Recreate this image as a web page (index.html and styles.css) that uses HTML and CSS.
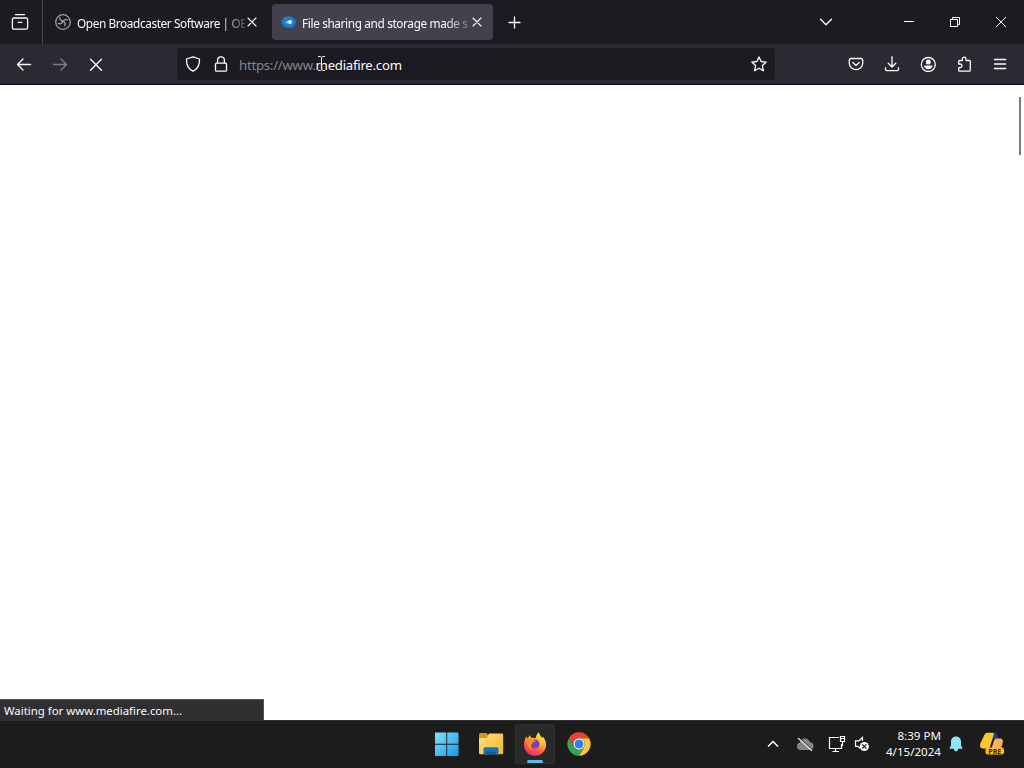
FILE: index.html
```html
<!DOCTYPE html>
<html lang="en">
<head>
<meta charset="utf-8">
<title>File sharing and storage made simple</title>
<link rel="stylesheet" href="styles.css">
</head>
<body>
<div class="screen">
  <header class="tabs">
    <div class="view">
      <svg class="line" width="18" height="18" viewBox="0 0 18 18"><path d="M4.500 1.700h9M3 5h12a1.600 1.600 0 0 1 1.600 1.600v8a1.600 1.600 0 0 1-1.600 1.600H3a1.600 1.600 0 0 1-1.600-1.600v-8A1.600 1.600 0 0 1 3 5zM7.200 9.300h3.600"/></svg>
    </div>
    <div class="tab">
      <svg class="favicon" width="16" height="16" viewBox="0 0 16 16" fill="none" stroke="#a0a0a2"><circle cx="8" cy="8" r="7.300" stroke-width="1.300"/><path stroke-width="1.300" d="M4.800 3.300c-.2 2 .9 3.500 3.200 3.900 1-1.800 3-2.300 5-1M8 7.200c1.800.8 2.600 2.700 1.600 5M8 7.200C7 9.600 5 10.400 2.900 9.200"/></svg>
      <span class="title t1">Open Broadcaster Software | OB</span>
      <svg class="line close" width="16" height="16" viewBox="0 0 16 16"><path d="M4 4l8 8M12 4l-8 8"/></svg>
    </div>
    <div class="tab active">
      <svg class="favicon" width="16" height="16" viewBox="0 0 16 16"><path fill="#1f7acb" d="M3 3.500c2 .1 3.500-1.200 6-1.200A6.700 5.700 0 0 1 15.700 8c0 3.500-2.900 5.800-6.700 5.800-2.500 0-3.800-1.300-6-1.100.8-.6 1-1.200.9-1.800C2.700 10.400 1.500 10 .2 10c1.500-.6 2-1.300 2.300-2.100C1.800 7 1 6.400 0 6.200c1.300-.3 2.300-.4 3.300-.8.1-.7.100-1.200-.3-1.900z"/><path fill="#70c4fa" d="M4 8.800c2 .1 2.700-2.900 6-2.900a2.200 2.200 0 0 1 0 4.400c-2.500 0-3-1.500-6-1.500z"/><circle cx="10" cy="8" r="1.700" fill="#fff"/></svg>
      <span class="title t2">File sharing and storage made s</span>
      <svg class="line close" width="16" height="16" viewBox="0 0 16 16"><path d="M4 4l8 8M12 4l-8 8"/></svg>
    </div>
    <div class="btn plus"><svg class="line" width="16" height="16" viewBox="0 0 16 16"><path d="M7.500 3v11M2 8.500h11"/></svg></div>
    <div class="btn list"><svg class="line" width="16" height="16" viewBox="0 0 16 16"><path d="M2.500 5.300L8 10.700l5.500-5.400"/></svg></div>
    <div class="win"><svg width="12" height="12" viewBox="0 0 12 12" stroke="#fff" fill="none"><path d="M1 5.500h10"/></svg></div>
    <div class="win"><svg width="12" height="12" viewBox="0 0 12 12" stroke="#fff" fill="none"><path d="M1.500 3.500h7v7h-7zM3.500 3.500v-2h7v7h-2"/></svg></div>
    <div class="win"><svg width="12" height="12" viewBox="0 0 12 12" stroke="#fff" fill="none"><path d="M1 1l10 10M11 1L1 11"/></svg></div>
  </header>

  <nav class="toolbar">
    <div class="btn"><svg class="line" width="16" height="16" viewBox="0 0 16 16"><path d="M14.500 8.500h-13M7 3L1.500 8.500 7 14"/></svg></div>
    <div class="btn dim"><svg class="line" width="16" height="16" viewBox="0 0 16 16"><path d="M1.500 8.500h13M9 3l5.500 5.500L9 14"/></svg></div>
    <div class="btn"><svg class="line" width="16" height="16" viewBox="0 0 16 16"><path d="M2.500 3.200l11 11M13.500 3.200l-11 11"/></svg></div>
    <div class="urlbar">
      <svg class="line" width="16" height="16" viewBox="0 0 16 16"><path d="M8 .8L14.500 3c.3 5.600-1.500 9.800-6.500 12.200C3 12.800 1.200 8.600 1.500 3z"/></svg>
      <svg class="line lock" width="16" height="16" viewBox="0 0 16 16"><path d="M3.500 7.200h9a1 1 0 0 1 1 1v6a1 1 0 0 1-1 1h-9a1 1 0 0 1-1-1v-6a1 1 0 0 1 1-1zM4.600 7V4.200a3.400 3.400 0 0 1 6.800 0V7"/></svg>
      <span class="url"><span class="prefix">https://www.</span>mediafire.com</span>
      <svg class="line star" width="16" height="16" viewBox="0 0 16 16"><path d="M8 .9l2.100 4.600 5.100.6-3.800 3.500 1 5.200L8 12.200l-4.400 2.600 1-5.200L.8 6.100l5.100-.6z"/></svg>
    </div>
    <div class="tools">
      <div class="btn"><svg class="line" width="16" height="16" viewBox="0 0 16 16"><path d="M2.800 2.500h10.400a1.500 1.500 0 0 1 1.500 1.500v3.300a6.700 6.300 0 0 1-13.400 0V4a1.500 1.500 0 0 1 1.500-1.500zM4.800 6.500L8 9.500l3.200-3"/></svg></div>
      <div class="btn"><svg class="line" width="16" height="16" viewBox="0 0 16 16"><path d="M8 .7v10.200M4.200 7.200L8 11l3.800-3.800M1.500 11.700v1.500A1.500 1.500 0 0 0 3 14.700h10a1.500 1.500 0 0 0 1.500-1.500v-1.500"/></svg></div>
      <div class="btn"><svg class="line" width="16" height="16" viewBox="0 0 16 16"><circle cx="8.300" cy="8.500" r="7"/><circle cx="8.300" cy="6" r="2.500" fill="#fbfbfe" stroke="none"/><path fill="#fbfbfe" stroke="none" d="M4 9.500h8.600c0 2-1.900 3.700-4.300 3.700S4 11.500 4 9.500z"/></svg></div>
      <div class="btn"><svg class="line" width="16" height="16" viewBox="0 0 16 16"><path d="M2.700 7.300V5.500a1 1 0 0 1 1-1h2.700V2.900a1.800 1.800 0 0 1 3.600 0v1.600h3.300a1 1 0 0 1 1 1v8.700a1 1 0 0 1-1 1H3.700a1 1 0 0 1-1-1v-2.500h1.400a1.800 1.800 0 0 0 0-3.700H2.700z"/></svg></div>
      <div class="btn"><svg class="line" width="16" height="16" viewBox="0 0 16 16"><path d="M2.500 3.500h11.200M2.500 8h11.200M2.500 12.500h11.200"/></svg></div>
    </div>
  </nav>

  <main class="page">
    <div class="scroll"></div>
    <div class="status"><span class="wait">Waiting for www.mediafire.com...</span></div>
  </main>

  <footer class="taskbar">
    <div class="apps">
      <div class="app"><svg width="24" height="24" viewBox="0 0 24 24"><defs><linearGradient id="win" x1="0" y1="0" x2="24" y2="24" gradientUnits="userSpaceOnUse"><stop offset="0" stop-color="#83e3fb"/><stop offset="1" stop-color="#1598e4"/></linearGradient></defs><path fill="url(#win)" d="M0 .500h11.300v11.300H0zM12.200.500h11.300v11.300H12.200zM0 12.700h11.300V24H0zM12.200 12.700h11.300V24H12.200z"/></svg></div>
      <div class="app"><svg width="26" height="24" viewBox="0 0 26 24"><defs><linearGradient id="fold" x2="1" y2="1"><stop stop-color="#ffdf82"/><stop offset="1" stop-color="#f4b62d"/></linearGradient></defs><path fill="#d39817" d="M1 2.500A1.500 1.500 0 0 1 2.500 1h6l2 2.500-2 3H1z"/><path fill="url(#fold)" d="M1 6h7.500l2.500-4.500h13a1.200 1.200 0 0 1 1.200 1.200V21a1.200 1.200 0 0 1-1.200 1.200H2.200A1.200 1.200 0 0 1 1 21z"/><path fill="#1374bd" d="M5.500 22.200V17a1.700 1.700 0 0 1 1.700-1.700h11.600a1.700 1.700 0 0 1 1.700 1.700v5.200z"/><path fill="#0c5899" d="M8.500 19.500h9v2.700h-9z"/></svg></div>
      <div class="app current"><svg width="24" height="24" viewBox="0 0 24 24"><defs><linearGradient id="fox" x1="18" y1="1" x2="6" y2="23" gradientUnits="userSpaceOnUse"><stop stop-color="#fff35a"/><stop offset=".4" stop-color="#ffad25"/><stop offset=".7" stop-color="#ff5542"/><stop offset="1" stop-color="#ef2677"/></linearGradient></defs><path fill="url(#fox)" d="M3.200 4.300c.2 1 .8 1.800 1.300 2.200L7 3c.1 1.500.8 2.400 2 2.800l3.500.5c1-2.500 1.200-4.700 3.500-6.100.2 3 2 3.600 3.200 5.800.4-.5.500-1 .4-1.700 2.500 3 3.600 5.800 3.400 9.200C22.600 19.500 18 23.700 12 23.700S1 19 1 13.200c0-3.300 1-6.200 2.200-8.900z"/><circle cx="12" cy="12" r="4.600" fill="#7842c5"/><path fill="#ff8a28" d="M4 7c2.500-.9 5-.6 6.800 1.300l2 .3c-.6 1.400-2.600 1.300-3.200 2.500-.5 1-2 2.300-1.800 3.700.4 1.700 2 2.700 4 2.900C7 18.500 3.500 15 4 7z"/><path fill="#ffc72e" d="M16 4c3.200 3.300 4 7.400 1.500 11 .2-3-.6-5.700-3.200-7.200C15.700 7 16 5.700 16 4z"/></svg><span class="mark"></span></div>
      <div class="app"><svg width="24" height="24" viewBox="0 0 24 24"><path fill="#e94235" d="M12 .3A11.700 11.700 0 0 1 22.130 6.150H12A5.850 5.850 0 0 0 6.930 14.920L1.870 6.150A11.700 11.700 0 0 1 12 .3z"/><path fill="#fcc934" d="M22.130 6.150A11.700 11.700 0 0 1 12 23.700L17.070 14.920A5.850 5.850 0 0 0 12 6.150z"/><path fill="#31a753" d="M12 23.700A11.700 11.700 0 0 1 1.870 6.150L6.930 14.920A5.850 5.850 0 0 0 17.070 14.920z"/><circle cx="12" cy="12" r="5.700" fill="#fff"/><circle cx="12" cy="12" r="4.500" fill="#367de8"/></svg></div>
    </div>
    <div class="tray">
      <svg class="up" width="12" height="8" viewBox="0 0 12 8" fill="none" stroke="#fff" stroke-width="1.500"><path d="M1 6.500l5-5 5 5"/></svg>
      <svg class="cloud" width="18" height="16" viewBox="0 0 18 16"><path fill="#858585" d="M4.500 14a3.800 3.800 0 0 1-.6-7.500C4.500 4 6.500 2.400 9 2.400c2.300 0 4.100 1.200 4.900 3.500 2.300.2 3.700 1.900 3.700 4.100 0 2.400-1.600 4-3.800 4z"/><path stroke="#1c1c1c" stroke-width="1" d="M2.800 1.500l13.500 12.300"/><path stroke="#eee" stroke-width="1.200" d="M2 2l14 12.700"/></svg>
      <svg class="net" width="18" height="18" viewBox="0 0 18 18" fill="none" stroke="#fff" stroke-width="1.200"><path d="M11 2.500H1.500v11h12V9M7.500 13.500v3M4.500 16.500h6.500M12.500 1.500h4v5h-4zM14.500 6.500v4.500M12.500 3.500h4"/></svg>
      <svg class="vol" width="16" height="16" viewBox="0 0 16 16"><path fill="none" stroke="#fff" stroke-width="1.200" d="M8.500 5V1.500L5 4.800H1.500v5.500H4l2 2"/><circle cx="10.300" cy="10.500" r="4.600" fill="#f8f8f8"/><path stroke="#1c1c1c" stroke-width="1.200" d="M8.200 8.400l4.200 4.200M12.400 8.400l-4.200 4.200"/></svg>
      <div class="clock"><span class="time">8:39 PM</span><span class="date">4/15/2024</span></div>
      <svg class="bell" width="14" height="16" viewBox="0 0 14 16" fill="#8ee6fb"><path d="M7 .5c3 0 5 2.200 5 5v4l1.500 2.600c.2.400 0 .7-.5.700H1c-.5 0-.7-.3-.5-.7L2 9.500v-4c0-2.800 2-5 5-5zM4.700 12.500h4.600c-.4 2-1.200 2.800-2.300 2.800s-1.900-.8-2.300-2.800z"/></svg>
      <svg class="copilot" width="26" height="26" viewBox="0 0 26 26"><path fill="#203e94" d="M13 2c3-.8 4.700.2 5.300 2.500l1 3.200h-4.500L11 10z"/><path fill="#ffc52e" d="M5.500 3.800C6.200 2.300 7.300 1.800 9 1.800h4.500c1.200 0 1.500.7 1.200 1.700L11 16c-.4 1.100-1 1.500-2 1.500H4.500c-3 0-4-2-3.200-5z"/><path fill="#f7b15d" d="M15 9.500c.5-1.500 1.500-2 3-2h2.500c3 0 4 2 3.200 4.500L22 17.500h-9.500z"/><rect x="6.500" y="16.500" width="18.500" height="7" rx="2" fill="#fabc20"/><text class="pre" x="15.800" y="22.500" text-anchor="middle">PRE</text></svg>
    </div>
  </footer>
  <svg class="cursor" width="9" height="17" viewBox="0 0 9 17" fill="none"><path stroke="#333" stroke-width="2" d="M4.500 2v13"/><path stroke="#eee" d="M1 1.500h2.500l1 .8 1-.8H8M4.500 2v13M1 15.500h2.500l1-.8 1 .8H8"/></svg>
</div>
</body>
</html>
```
FILE: styles.css
```css
* { box-sizing: border-box; }
body { margin: 0; font-family: "Noto Sans", "Open Sans", sans-serif; font-size: 12px; color: #fbfbfe; }
svg { display: block; flex: none; }
.screen { position: relative; width: 1024px; height: 768px; display: flex; flex-direction: column; overflow: hidden; }
.line { fill: none; stroke: #fbfbfe; stroke-width: 1.3; stroke-linecap: round; stroke-linejoin: round; }

.tabs { height: 44px; display: flex; align-items: center; background: #1c1b20; }
.view { width: 43px; height: 44px; padding-left: 11px; display: flex; align-items: center; border-right: 1px solid #4a494e; }
.tab { width: 221px; height: 36px; margin-left: 4px; padding: 0 8px; display: flex; align-items: center; border-radius: 4px; }
.active { background: #42414d; }
.title { width: 168px; margin-left: 6px; padding-top: 1px; white-space: nowrap; line-height: 18px; font-size: 11.8px; -webkit-mask-image: linear-gradient(to right, #000 142px, transparent 176px); mask-image: linear-gradient(to right, #000 142px, transparent 176px); }
.t1 { letter-spacing: -0.39px; }
.t2 { letter-spacing: -0.36px; }
.close { margin-left: -1px; stroke-width: 1.1; }
.btn { width: 36px; height: 36px; flex: none; display: flex; align-items: center; justify-content: center; }
.plus { margin-left: 4px; }
.list { margin: 0 42px 0 auto; }
.win { width: 46px; height: 44px; display: flex; align-items: center; justify-content: center; }

.toolbar { height: 41px; padding: 0 6px; display: flex; align-items: center; background: #2b2a33; border-bottom: 1px solid #09080c; }
.dim { opacity: .4; }
.urlbar { width: 598px; height: 32px; margin-left: 63px; padding: 0 8px; display: flex; align-items: center; background: #1c1b21; border-radius: 4px; }
.lock { margin-left: 12px; }
.url { margin-left: 10px; font-size: 13.2px; letter-spacing: -0.25px; line-height: 20px; padding-top: 1px; }
.prefix { color: #86858b; }
.star { margin-left: auto; }
.tools { display: flex; margin-left: auto; }

.page { height: 635px; display: flex; flex-direction: column; justify-content: space-between; background: #fff; }
.scroll { width: 2px; height: 58px; margin: 12px 3px 0 auto; background: #7b7b7b; }
.status { width: 264px; height: 21px; padding-left: 4px; line-height: 22px; font-size: 11.4px; background: #303033; border: solid #55555a; border-width: 1px 1px 0 0; }

.taskbar { height: 48px; display: flex; justify-content: flex-end; background: #1c1c1c; box-shadow: inset 0 1px #303030; }
.apps { display: flex; align-items: center; gap: 4px; margin-right: 168px; }
.app { position: relative; width: 40px; height: 40px; display: flex; align-items: center; justify-content: center; }
.current { background: #292929; border-radius: 4px; box-shadow: inset 0 0 0 1px #303030; }
.mark { position: absolute; left: 12px; bottom: 1px; width: 16px; height: 3px; border-radius: 2px; background: #59bce6; }
.tray { width: 257px; display: flex; align-items: center; }
.cloud { margin-left: 17px; }
.net { margin-left: 14px; }
.vol { margin-left: 8px; }
.clock { width: 62px; margin-left: 9px; display: flex; flex-direction: column; align-items: flex-end; font-size: 11.6px; line-height: 16px; white-space: nowrap; }
.bell { margin-left: 8px; }
.copilot { margin-left: 16px; }
.pre { font: bold 7px "Open Sans", sans-serif; fill: #392500; }
.cursor { position: absolute; left: 317px; top: 55px; }
```
